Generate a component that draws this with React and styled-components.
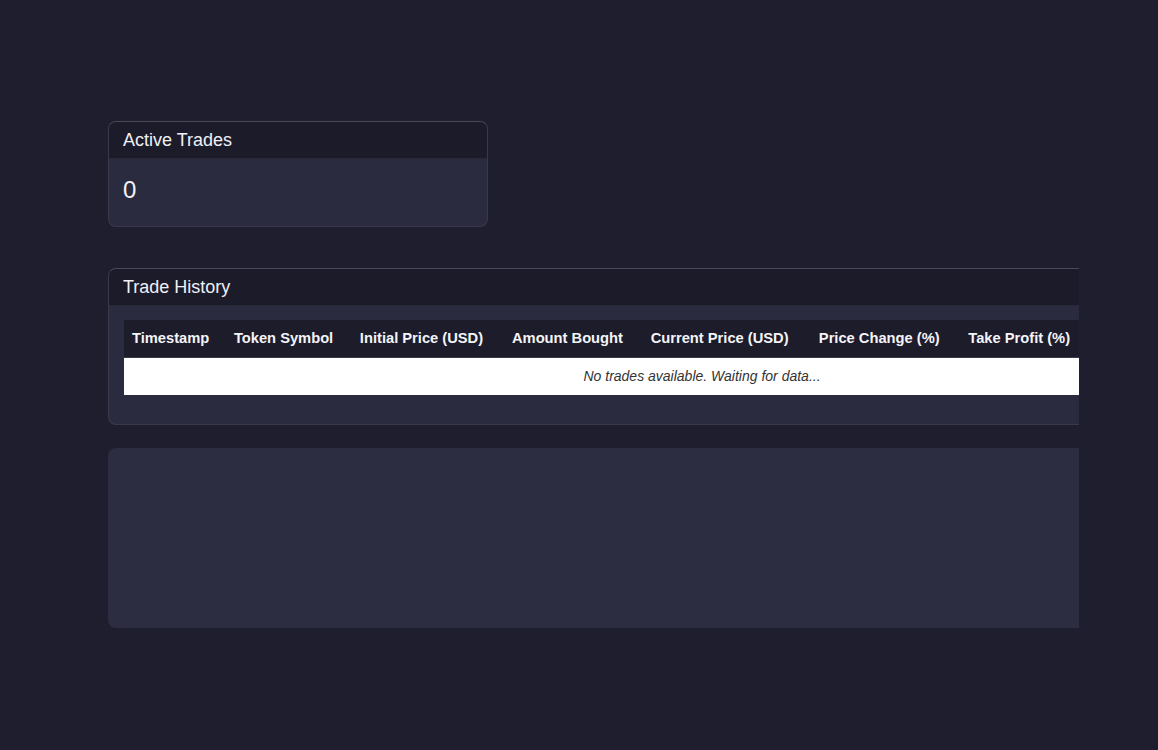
import React from "react";
import styled, { createGlobalStyle } from "styled-components";

const GlobalStyle = createGlobalStyle`
  html, body {
    margin: 0;
    padding: 0;
    background: #1f1e2e;
    font-family: "Liberation Sans", Arial, sans-serif;
    color: #ececf2;
  }
`;

const Page = styled.div`
  min-height: 750px;
  padding: 121px 0 0 108px;
  box-sizing: border-box;
`;

const Viewport = styled.div`
  width: 971px;
  overflow: hidden;
  display: flex;
  flex-direction: column;
`;

const Card = styled.section`
  width: ${(p) => p.$width || "1120px"};
  flex-shrink: 0;
  box-sizing: border-box;
  background: #2a2b3e;
  border: 1px solid rgba(255, 255, 255, 0.07);
  border-top-color: rgba(255, 255, 255, 0.14);
  border-radius: 8px;
  overflow: hidden;
  margin-bottom: ${(p) => p.$gap || "0"};
`;

const CardHeader = styled.header`
  height: 37px;
  box-sizing: border-box;
  display: flex;
  align-items: center;
  padding: 1px 14px 0;
  background: #1c1b2a;
  border-bottom: 1px solid rgba(255, 255, 255, 0.06);
  font-size: 18px;
  color: #f0f0f5;
`;

const CardBody = styled.div`
  padding: ${(p) => p.$pad || "15px"};
`;

const Stat = styled.div`
  font-size: 24px;
  line-height: 32px;
  color: #f2f2f7;
  padding: 0 0 4px;
`;

const Table = styled.table`
  width: 1156px;
  border-collapse: collapse;
  font-size: 14.7px;
`;

const Th = styled.th`
  background: #1d1c2b;
  color: #f4f4f8;
  font-weight: bold;
  text-align: left;
  padding: 10px 8px 11px;
  white-space: nowrap;
  border-bottom: 1px solid #3a3a4a;
`;

const EmptyCell = styled.td`
  background: #ffffff;
  color: #333333;
  font-style: italic;
  font-size: 14px;
  text-align: center;
  padding: 10px 8px;
  line-height: 17px;
`;

const ChartCard = styled.div`
  width: 1120px;
  height: 180px;
  flex-shrink: 0;
  background: #2c2d41;
  border-radius: 8px;
`;

const columns = [
  "Timestamp",
  "Token Symbol",
  "Initial Price (USD)",
  "Amount Bought",
  "Current Price (USD)",
  "Price Change (%)",
  "Take Profit (%)",
  "Stop Loss (%)",
  "Status",
];

const App = () => {
  return (
    <>
      <GlobalStyle />
      <Page>
        <Viewport>
          <Card $width="380px" $gap="41px">
            <CardHeader>Active Trades</CardHeader>
            <CardBody $pad="15px 14px 16px">
              <Stat>0</Stat>
            </CardBody>
          </Card>
          <Card $gap="23px">
            <CardHeader>Trade History</CardHeader>
            <CardBody $pad="14px 15px 29px">
              <Table>
                <thead>
                  <tr>
                    {columns.map((c) => (
                      <Th key={c}>{c}</Th>
                    ))}
                  </tr>
                </thead>
                <tbody>
                  <tr>
                    <EmptyCell colSpan={columns.length}>
                      No trades available. Waiting for data...
                    </EmptyCell>
                  </tr>
                </tbody>
              </Table>
            </CardBody>
          </Card>
          <ChartCard />
        </Viewport>
      </Page>
    </>
  );
};

export default App;
